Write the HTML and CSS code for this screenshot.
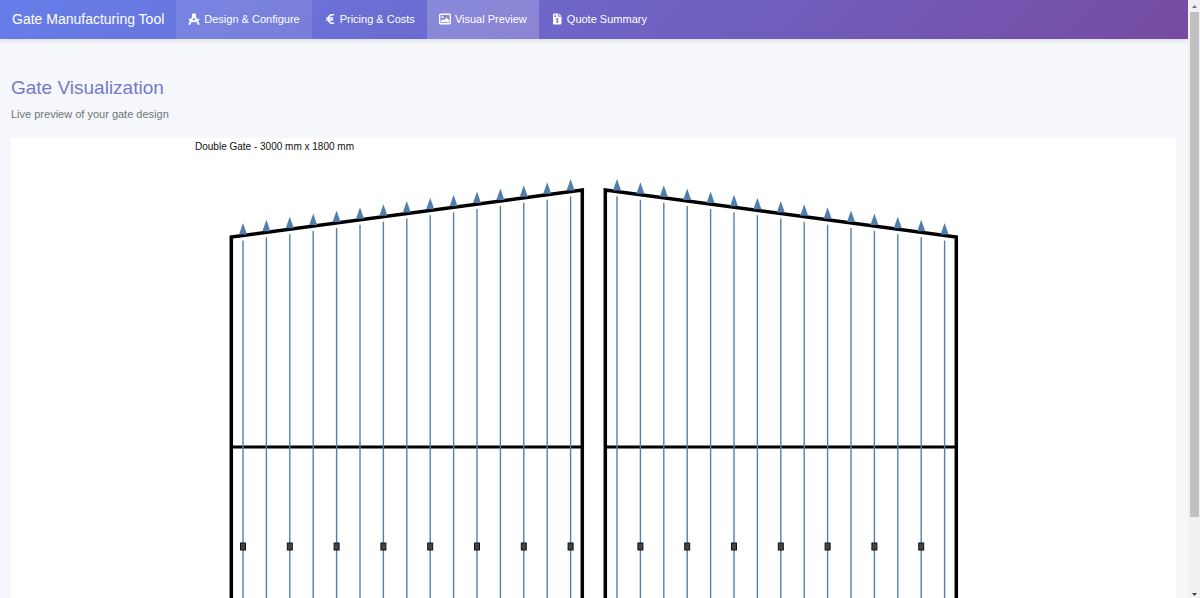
FILE: index.html
```html
<!DOCTYPE html>
<html lang="en">
  <head>
    <meta charset="UTF-8" />
    <meta name="viewport" content="width=device-width, initial-scale=1.0" />
    <title>Gate Manufacturing Tool</title>
    <link rel="stylesheet" href="styles.css">
  </head>
  <body>
    <div class="page">
      <header class="navbar">
        <a class="brand" href="#">Gate Manufacturing Tool</a>
        <nav class="tabs">
          <a class="tab hovered" href="#design">
            <svg class="icon" viewBox="0 0 12 12" aria-hidden="true">
              <path d="M6 2 L1.500 11 M6 2 L10.500 11 M1.500 6.500 Q6 10 10.500 6.500" fill="none" stroke="currentColor" stroke-width="1.800" stroke-linecap="round" />
              <circle cx="6" cy="2.500" r="2.200" fill="currentColor" />
            </svg>
            Design &amp; Configure
          </a>
          <a class="tab" href="#pricing">
            <svg class="icon" viewBox="0 0 12 12" aria-hidden="true">
              <path d="M9.500 1.800 H8.500 C6 1.800 4.500 3.500 4.500 6 C4.500 8.500 6 10.200 8.500 10.200 H9.500 M2.800 5 H8.500 M2.800 7 H8.500" fill="none" stroke="currentColor" stroke-width="1.500" stroke-linecap="round" />
            </svg>
            Pricing &amp; Costs
          </a>
          <a class="tab active" href="#preview">
            <svg class="icon" viewBox="0 0 12 12" aria-hidden="true">
              <rect x="0.700" y="1.200" width="10.600" height="9.600" rx="1" fill="none" stroke="currentColor" stroke-width="1.400" />
              <circle cx="3.500" cy="4" r="1.100" fill="currentColor" />
              <path d="M2 9.300 V8 L4 6.300 L5 7.200 L7.500 4.500 L10 7.300 V9.300 Z" fill="currentColor" />
            </svg>
            Visual Preview
          </a>
          <a class="tab" href="#quote">
            <svg class="icon" viewBox="0 0 12 12" aria-hidden="true">
              <path d="M3 0.500 H7 V3.500 H10.500 V10.500 Q10.500 11.500 9.500 11.500 H3 Q2 11.500 2 10.500 V1.500 Q2 0.500 3 0.500 Z M7.700 0.500 L10.500 2.800 H7.700 Z" fill="currentColor" />
              <path d="M3.300 2 H5.300 M3.300 3.500 H5.300 M7.600 5.800 C5.700 5 4.500 6.300 5.700 7.100 L6.900 7.600 C8.100 8.500 6.700 9.800 4.900 8.900 M6.200 5 V10" fill="none" stroke="#6c62bd" stroke-width="0.800" />
            </svg>
            Quote Summary
          </a>
        </nav>
      </header>
      <main>
        <h1>Gate Visualization</h1>
        <p class="subtitle">Live preview of your gate design</p>
        <div class="canvas">
          <svg id="gate" viewBox="0 0 1165 560" role="img" aria-label="Double gate drawing">
            <text class="caption" x="184" y="12">Double Gate - 3000 mm x 1800 mm</text>
          </svg>
        </div>
      </main>
    </div>
    <div class="scrollbar" aria-hidden="true">
      <svg class="arrow" viewBox="0 0 9 12">
        <path d="M2 8 L4.500 5 L7 8 Z" fill="#777" />
      </svg>
      <span class="track"><span class="thumb"></span></span>
      <svg class="arrow" viewBox="0 0 9 12">
        <path d="M2 7 L4.500 10 L7 7 Z" fill="#444" />
      </svg>
    </div>
    <script>
      const svg = document.getElementById("gate");
      const pickets = 15;
      const leafWidth = 351;
      const outerTop = 99;
      const innerTop = 52;
      const railY = 309;
      const bottom = 560;

      const draw = (tag, className, attrs) => {
        const el = document.createElementNS("http://www.w3.org/2000/svg", tag);
        el.setAttribute("class", className);
        Object.entries(attrs).forEach(([key, value]) => el.setAttribute(key, value));
        svg.appendChild(el);
      };

      // outer is the hinge side, dir is the direction towards the centre
      const drawLeaf = (outer, dir, claspStart) => {
        const inner = outer + dir * leafWidth;
        draw("path", "frame", {
          d: `M${outer} ${bottom} V${outerTop} L${inner} ${innerTop} V${bottom}`,
        });
        draw("path", "rail", { d: `M${outer} ${railY} H${inner}` });
        for (let i = 0; i < pickets; i++) {
          const t = (i + 0.5) / pickets;
          const x = outer + dir * leafWidth * t;
          const y = outerTop + (innerTop - outerTop) * t;
          draw("path", "picket", { d: `M${x} ${y + 5} V${bottom}` });
          draw("path", "spike", { d: `M${x - 4} ${y - 1} L${x} ${y - 12.5} L${x + 4} ${y - 1} Z` });
          if (i % 2 === claspStart) {
            draw("rect", "clasp", { x: x - 2.5, y: 405, width: 5, height: 7 });
          }
        }
      };

      drawLeaf(220.3, 1, 0);
      drawLeaf(945.3, -1, 1);
    </script>
  </body>
</html>
```

FILE: styles.css
```css
* {
  box-sizing: border-box;
}
body {
  display: flex;
  height: 100vh;
  margin: 0;
  overflow: hidden;
  font-family: "Liberation Sans", Arial, sans-serif;
  background-color: #f5f7fb;
}
.page {
  flex: 1;
  min-width: 0;
  overflow: hidden;
}
.navbar {
  display: flex;
  height: 39px;
  background: linear-gradient(135deg, #667eea 0%, #764ba2 100%);
  box-shadow: 0 2px 4px rgba(0, 0, 0, 0.1);
}
.navbar a {
  display: flex;
  align-items: center;
  padding: 0 12px 2px;
  color: white;
  text-decoration: none;
  white-space: nowrap;
}
.navbar .brand {
  padding-left: 12px;
  font-size: 14px;
}
.tabs {
  display: flex;
}
.tab {
  gap: 4px;
  font-size: 11px;
}
.tab.hovered {
  background-color: rgba(255, 255, 255, 0.1);
}
.tab.active {
  background-color: rgba(255, 255, 255, 0.2);
}
.icon {
  width: 12px;
  height: 12px;
}
main {
  padding: 37px 12px 0 11px;
}
h1 {
  margin: 0;
  font-size: 19px;
  font-weight: normal;
  line-height: 24px;
  color: #757bc8;
}
.subtitle {
  margin: 6px 0 16px;
  font-size: 11px;
  line-height: 16px;
  color: #6c757d;
}
.canvas {
  background-color: white;
}
.canvas svg {
  display: block;
  width: 100%;
}
.caption {
  font-size: 10px;
  fill: #111;
}
.frame,
.rail {
  fill: none;
  stroke: black;
  stroke-width: 3.5px;
}
.rail {
  stroke-width: 3px;
}
.picket {
  stroke: #5580aa;
  stroke-width: 1.4px;
}
.spike {
  fill: #507ead;
}
.clasp {
  fill: #444;
  stroke: #111;
  stroke-width: 1px;
}
.scrollbar {
  display: flex;
  flex-direction: column;
  width: 12px;
  padding: 0 1px 0 2px;
  background-color: #f1f1f1;
}
.arrow {
  width: 9px;
  height: 12px;
}
.track {
  flex: 1;
}
.thumb {
  display: block;
  height: 88%;
  background-color: #c1c1c1;
}
```
